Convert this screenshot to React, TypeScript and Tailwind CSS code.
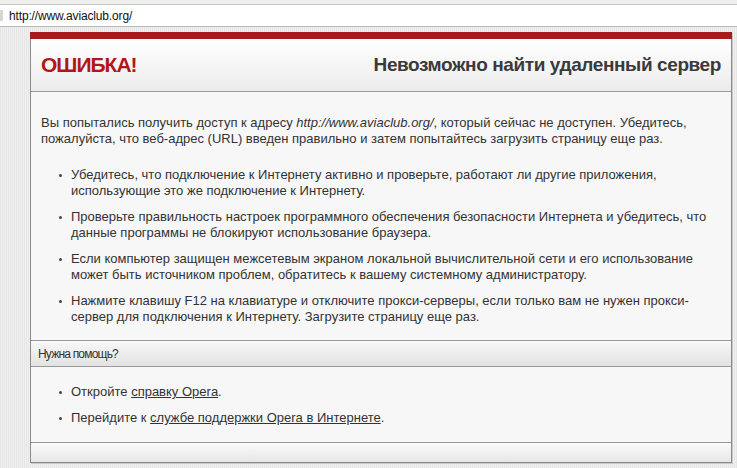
import type { ReactNode } from "react";

const tips: string[][] = [
	[
		"Убедитесь, что подключение к Интернету активно и проверьте, работают ли другие приложения,",
		"использующие это же подключение к Интернету.",
	],
	[
		"Проверьте правильность настроек программного обеспечения безопасности Интернета и убедитесь, что",
		"данные программы не блокируют использование браузера.",
	],
	[
		"Если компьютер защищен межсетевым экраном локальной вычислительной сети и его использование",
		"может быть источником проблем, обратитесь к вашему системному администратору.",
	],
	[
		"Нажмите клавишу F12 на клавиатуре и отключите прокси-серверы, если только вам не нужен прокси-",
		"сервер для подключения к Интернету. Загрузите страницу еще раз.",
	],
];

function Bullet({ children }: { children: ReactNode }) {
	return (
		<li className="flex">
			<span className="w-[30px] shrink-0 flex justify-end pr-[9px] pt-[7px]">
				<span className="block w-[3px] h-[3px] rounded-full bg-[#444]" />
			</span>
			<div className="whitespace-nowrap">{children}</div>
		</li>
	);
}

export default function App() {
	return (
		<div className="w-[737px] h-[468px] overflow-hidden flex flex-col bg-white font-['Liberation_Sans',Arial,sans-serif] text-[#333]">
			{/* address bar */}
			<div className="h-[5px] bg-[#eeeeec] border-b border-[#c4c4c4]" />
			<div className="h-[22px] flex items-center bg-white border-b border-[#b9b9b9] relative">
				<span className="absolute left-0 top-[5px] w-[3px] h-[11px] bg-[#d6d6d6]" />
				<span className="pl-[9px] text-[12px] tracking-[-0.15px] text-[#111]">http://www.aviaclub.org/</span>
			</div>

			{/* page */}
			<div className="flex-1 pl-[30px] pt-[5px] bg-[#ececec] bg-[repeating-linear-gradient(90deg,#e6e6e6_0px,#e6e6e6_1px,#f0f0f0_1px,#f0f0f0_2px)]">
				<div className="w-[702px] border-t-[7px] border-[#a61c1c] shadow-[1px_1px_0_#c8c8c8]">
					<div className="border-x border-b border-[#8a8a8a] bg-[#f7f7f7]">
						{/* header */}
						<div className="h-[53px] flex items-center justify-between px-[10px] border-b border-[#9a9a9a] bg-gradient-to-b from-white to-[#ececec]">
							<h1 className="text-[21px] font-bold text-[#b01818] tracking-[-1px]">ОШИБКА!</h1>
							<h2 className="text-[19px] font-bold text-[#3a3a3a] tracking-[-0.4px]">
								Невозможно найти удаленный сервер
							</h2>
						</div>

						{/* details */}
						<div className="pt-[23px] pb-[15px] pl-[10px] text-[13px] leading-[16px] border-b border-[#9a9a9a]">
							<p className="whitespace-nowrap">
								Вы попытались получить доступ к адресу <i>http://www.aviaclub.org/</i>, который сейчас не доступен. Убедитесь,
								<br />
								пожалуйста, что веб-адрес (URL) введен правильно и затем попытайтесь загрузить страницу еще раз.
							</p>
							<ul className="mt-[20px] flex flex-col gap-[10px]">
								{tips.map((lines) => (
									<Bullet key={lines[0]}>
										{lines[0]}
										<br />
										{lines[1]}
									</Bullet>
								))}
							</ul>
						</div>

						{/* help */}
						<div className="h-[26px] flex items-center pl-[7px] text-[12px] tracking-[-0.8px] border-b border-[#9a9a9a] bg-gradient-to-b from-[#f8f8f8] to-[#e2e2e2]">
							Нужна помощь?
						</div>
						<ul className="pt-[17px] pb-[16px] pl-[10px] flex flex-col gap-[10px] text-[13px] leading-[16px] border-b border-[#9a9a9a]">
							<Bullet>
								Откройте <span className="underline">справку Opera</span>.
							</Bullet>
							<Bullet>
								Перейдите к <span className="underline">службе поддержки Opera в Интернете</span>.
							</Bullet>
						</ul>
						<div className="h-[19px] bg-gradient-to-b from-[#fbfbfb] to-[#e6e6e6]" />
					</div>
				</div>
			</div>
		</div>
	);
}
